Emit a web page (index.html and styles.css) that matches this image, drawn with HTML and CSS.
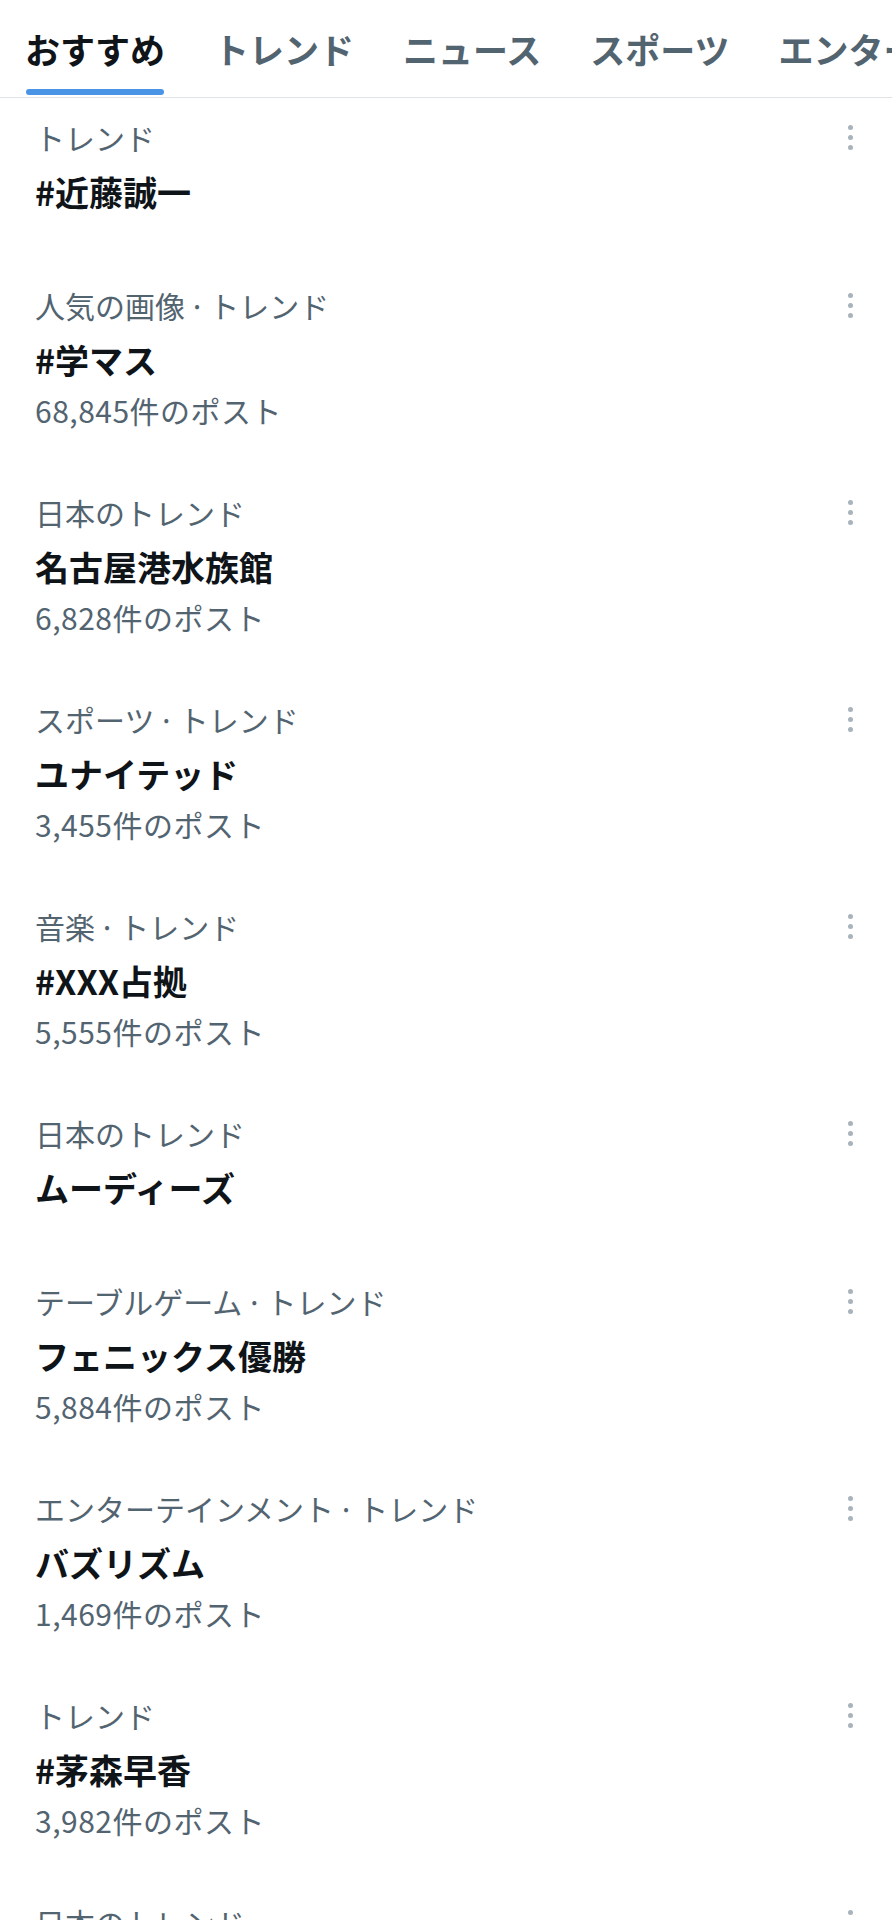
FILE: index.html
```html
<!DOCTYPE html>
<html lang="ja">
<head>
<meta charset="utf-8">
<title>トレンド</title>
<link rel="stylesheet" href="styles.css">
</head>
<body>
<nav class="tabs">
  <div class="tab active"><span class="tab-label">おすすめ</span></div>
  <div class="tab"><span class="tab-label">トレンド</span></div>
  <div class="tab"><span class="tab-label">ニュース</span></div>
  <div class="tab"><span class="tab-label">スポーツ</span></div>
  <div class="tab"><span class="tab-label">エンターテインメント</span></div>
</nav>
<main class="list">
  <div class="trend no-count">
    <div class="body"><div class="cat">トレンド</div><div class="title">#近藤誠一</div></div>
    <div class="more"><i></i><i></i><i></i></div>
  </div>
  <div class="trend">
    <div class="body"><div class="cat">人気の画像 · トレンド</div><div class="title">#学マス</div><div class="count">68,845件のポスト</div></div>
    <div class="more"><i></i><i></i><i></i></div>
  </div>
  <div class="trend">
    <div class="body"><div class="cat">日本のトレンド</div><div class="title">名古屋港水族館</div><div class="count">6,828件のポスト</div></div>
    <div class="more"><i></i><i></i><i></i></div>
  </div>
  <div class="trend">
    <div class="body"><div class="cat">スポーツ · トレンド</div><div class="title">ユナイテッド</div><div class="count">3,455件のポスト</div></div>
    <div class="more"><i></i><i></i><i></i></div>
  </div>
  <div class="trend">
    <div class="body"><div class="cat">音楽 · トレンド</div><div class="title">#XXX占拠</div><div class="count">5,555件のポスト</div></div>
    <div class="more"><i></i><i></i><i></i></div>
  </div>
  <div class="trend no-count">
    <div class="body"><div class="cat">日本のトレンド</div><div class="title">ムーディーズ</div></div>
    <div class="more"><i></i><i></i><i></i></div>
  </div>
  <div class="trend">
    <div class="body"><div class="cat">テーブルゲーム · トレンド</div><div class="title">フェニックス優勝</div><div class="count">5,884件のポスト</div></div>
    <div class="more"><i></i><i></i><i></i></div>
  </div>
  <div class="trend">
    <div class="body"><div class="cat">エンターテインメント · トレンド</div><div class="title">バズリズム</div><div class="count">1,469件のポスト</div></div>
    <div class="more"><i></i><i></i><i></i></div>
  </div>
  <div class="trend">
    <div class="body"><div class="cat">トレンド</div><div class="title">#茅森早香</div><div class="count">3,982件のポスト</div></div>
    <div class="more"><i></i><i></i><i></i></div>
  </div>
  <div class="trend">
    <div class="body"><div class="cat">日本のトレンド</div><div class="title">#トレンド</div><div class="count">2,000件のポスト</div></div>
    <div class="more"><i></i><i></i><i></i></div>
  </div>
</main>
</body>
</html>
```
FILE: styles.css
```css
* { box-sizing: border-box; }
html, body {
  margin: 0;
  padding: 0;
  background: #ffffff;
}
body {
  font-family: "Noto Sans CJK JP", "Noto Sans", sans-serif;
  color: #0f1419;
  width: 892px;
  overflow: hidden;
}
.tabs {
  display: flex;
  gap: 49px;
  padding: 0 0 0 25px;
  border-bottom: 1px solid #dfe3e6;
  white-space: nowrap;
  overflow: hidden;
  height: 98px;
}
.tab {
  flex: none;
  display: flex;
  flex-direction: column;
  justify-content: flex-end;
  height: 97px;
  position: relative;
}
.tab-label {
  font-size: 35px;
  font-weight: 700;
  color: #536471;
  line-height: 40px;
  padding-bottom: 28px;
}
.tab.active .tab-label { color: #0f1419; }
.tab.active::after {
  content: "";
  position: absolute;
  left: 1px;
  right: 1px;
  bottom: 2px;
  height: 6px;
  border-radius: 3px;
  background: #4a94e6;
}
.list { display: flex; flex-direction: column; }
.trend {
  display: flex;
  align-items: flex-start;
  padding: 12px 0 40px 35px;
}
.trend.no-count { padding-bottom: 46px; }
.body { flex: 1; min-width: 0; }
.cat {
  font-size: 30px;
  line-height: 54px;
  word-spacing: -3px;
  color: #536471;
}
.title {
  font-size: 34px;
  font-weight: 700;
  line-height: 56px;
  color: #0f1419;
}
.count {
  font-size: 30px;
  line-height: 45px;
  letter-spacing: 0.5px;
  color: #536471;
}
.more {
  flex: none;
  width: 84px;
  height: 54px;
  display: flex;
  flex-direction: column;
  align-items: center;
  justify-content: center;
  gap: 5px;
}
.more i {
  display: block;
  width: 5px;
  height: 5px;
  border-radius: 50%;
  background: #a9b3bc;
}
```
